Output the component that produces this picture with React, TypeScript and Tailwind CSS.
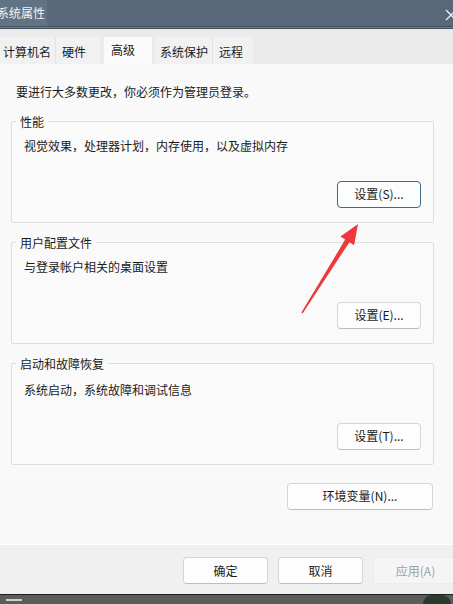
import React from "react";

const font = { fontFamily: '"Noto Sans CJK SC", "Noto Sans", sans-serif' };

function Btn({
  children,
  focused,
  disabled,
  className = "",
}: {
  children: React.ReactNode;
  focused?: boolean;
  disabled?: boolean;
  className?: string;
}) {
  const base =
    "flex items-center justify-center h-[27px] rounded-[4px] text-[12px] leading-[16px] shrink-0 ";
  const look = focused
    ? "bg-[#fcfdfd] border border-[#3d6a88] text-[#1a1a1a] "
    : disabled
    ? "bg-[#f5f5f5] border border-[#ececec] text-[#a0a0a0] "
    : "bg-[#fdfdfd] border border-[#d6d6d6] border-b-[#bdbdbd] text-[#1a1a1a] ";
  return <div className={base + look + className}>{children}</div>;
}

function Group({
  title,
  desc,
  btn,
  focused,
  className = "",
  descGap = "mt-[8px]",
  btnGap = "mt-[27px]",
}: {
  title: string;
  desc: string;
  btn: string;
  focused?: boolean;
  className?: string;
  descGap?: string;
  btnGap?: string;
}) {
  return (
    <fieldset
      className={
        "ml-[11px] w-[423px] border border-[#dedede] rounded-[2px] pl-[4px] pr-[4px] pb-[14px] bg-[#fafafa] " +
        className
      }
    >
      <legend className="px-[4px] text-[12px] leading-[16px] text-[#1a1a1a]">{title}</legend>
      <div className="px-[8px]">
        <div className={descGap + " text-[12px] leading-[16px] text-[#1a1a1a]"}>{desc}</div>
        <div className={btnGap + " flex justify-end"}>
          <Btn focused={focused} className="w-[84px]">
            {btn}
          </Btn>
        </div>
      </div>
    </fieldset>
  );
}

export default function App() {
  return (
    <div
      className="relative w-[453px] h-[604px] overflow-hidden flex flex-col bg-[#f9f9f9]"
      style={font}
    >
      {/* Title bar */}
      <div className="h-[26px] bg-[#56687a] flex items-center justify-between">
        <div className="h-[26px] w-[47px] bg-[#617384] flex items-center">
          <span className="-ml-[3px] text-[12px] leading-[16px] text-[#f2f5f7] whitespace-nowrap">
            系统属性
          </span>
        </div>
        <svg width="12" height="12" viewBox="0 0 12 12" className="-mr-[4px] mt-[3px]">
          <path d="M1 1 L11 11 M11 1 L1 11" stroke="#e8edf1" strokeWidth="1.4" />
        </svg>
      </div>
      <div className="h-[1px] bg-[#46545f]" />
      <div className="h-[1px] bg-[#6b7a87]" />
      <div className="h-[1px] bg-[#46545f]" />
      <div className="h-[1px] bg-[#dfe7ee]" />

      {/* Tabs */}
      <div className="h-[34px] bg-[#ebebeb] flex items-end">
        <div className="h-[27px] flex items-stretch text-[12px] leading-[16px] text-[#1a1a1a]">
          <div className="w-[56px] pl-[3px] pt-[7px] bg-[#f1f1f1] border-r border-[#e2e2e2]">计算机名</div>
          <div className="w-[44px] pl-[6px] pt-[7px] bg-[#f1f1f1]">硬件</div>
          <div className="w-[4px] bg-[#ebebeb]" />
          <div className="w-[48px] pl-[7px] pt-[5px] bg-[#fafafa]">高级</div>
          <div className="w-[3px] bg-[#ebebeb]" />
          <div className="w-[58px] pl-[5px] pt-[7px] bg-[#f1f1f1] border-r border-[#e2e2e2]">系统保护</div>
          <div className="w-[40px] pl-[6px] pt-[7px] bg-[#f1f1f1]">远程</div>
        </div>
      </div>

      {/* Content */}
      <div className="h-[481px] bg-[#f9f9f9] pt-[20px] flex flex-col">
        <div className="pl-[16px] text-[12px] leading-[16px] text-[#1a1a1a]">
          要进行大多数更改，你必须作为管理员登录。
        </div>
        <Group
          className="mt-[14px]"
          title="性能"
          desc="视觉效果，处理器计划，内存使用，以及虚拟内存"
          btn="设置(S)..."
          focused
        />
        <Group
          className="mt-[12px]"
          title="用户配置文件"
          desc="与登录帐户相关的桌面设置"
          btn="设置(E)..."
        />
        <Group
          className="mt-[12px]"
          title="启动和故障恢复"
          desc="系统启动，系统故障和调试信息"
          btn="设置(T)..."
          descGap="mt-[10px]"
          btnGap="mt-[25px]"
        />
        <div className="ml-[11px] w-[423px] mt-[18px] flex justify-end pr-[1px]">
          <Btn className="w-[146px]">环境变量(N)...</Btn>
        </div>
      </div>

      {/* Footer */}
      <div className="h-[1px] bg-[#ffffff]" />
      <div className="h-[49px] bg-[#f0f0f0] flex pt-[12px] pl-[183px] gap-[10px]">
        <Btn className="w-[85px]">确定</Btn>
        <Btn className="w-[85px]">取消</Btn>
        <Btn disabled className="w-[85px]">应用(A)</Btn>
      </div>

      {/* Taskbar strip */}
      <div className="h-[1px] bg-[#1e1e1e]" />
      <div className="flex-1 bg-[#5c5c5c] flex items-center justify-between">
        <div className="ml-[6px] w-[16px] h-[2px] bg-[#cfcfcf]" />
        <div className="mr-[2px] w-[28px] h-[9px] rounded-t-[10px] bg-[#2a3a2c]" />
      </div>

      {/* Red arrow annotation */}
      <svg
        className="absolute left-0 top-0 pointer-events-none"
        width="453"
        height="604"
        viewBox="0 0 453 604"
      >
        <polygon
          points="301.4,312.6 345.2,239.6 340.5,236.6 358,224 354.1,245.2 349.4,242.2 302.6,313.4"
          fill="#ec3a3c"
        />
      </svg>
    </div>
  );
}
